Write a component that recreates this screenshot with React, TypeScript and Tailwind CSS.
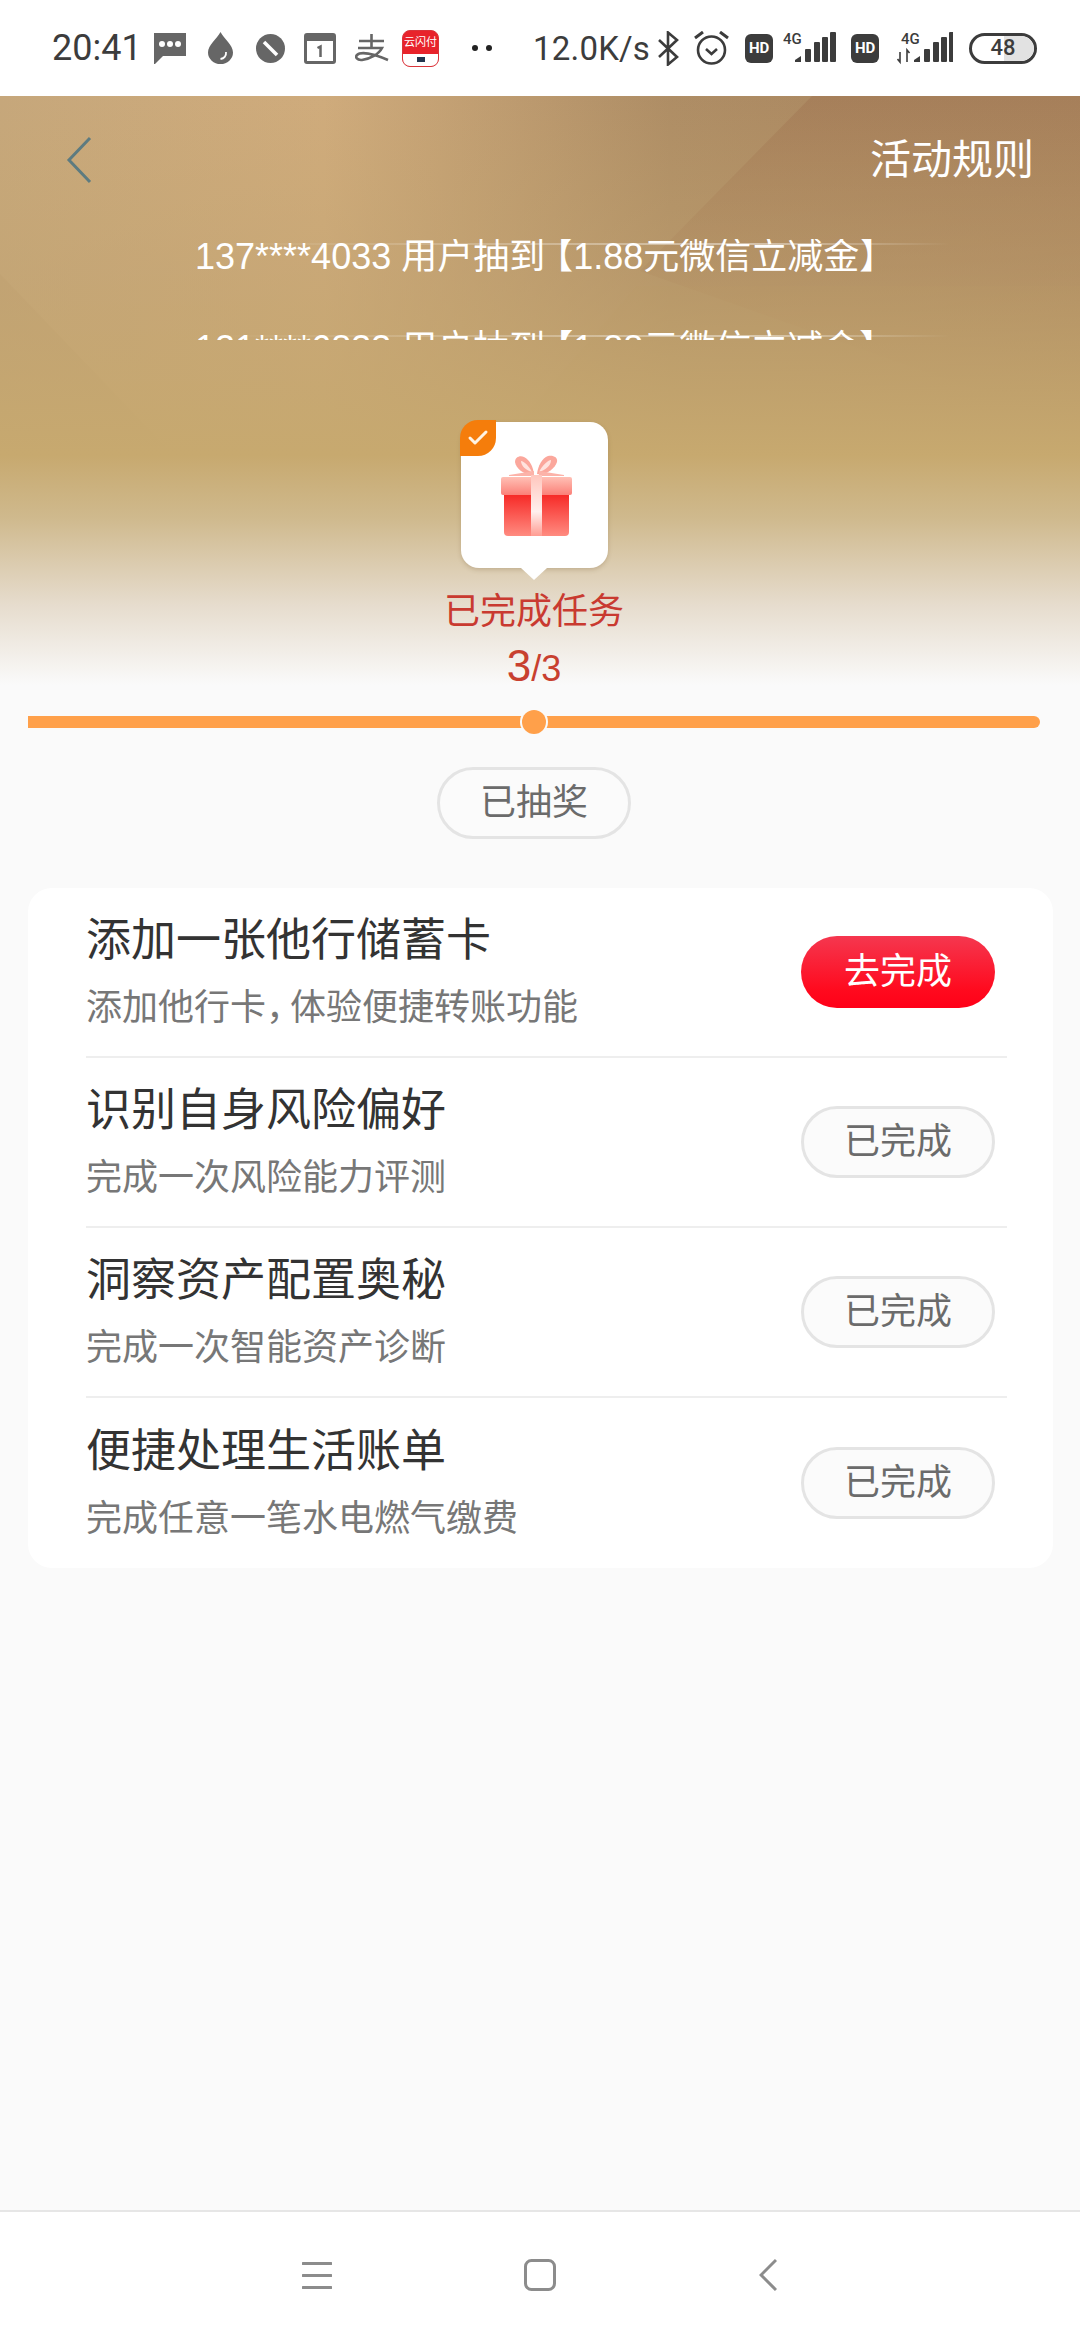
import type { ReactNode } from "react"
import { Check } from "lucide-react"

const tasks: { title: string; desc: ReactNode; done: boolean }[] = [
  {
    title: "添加一张他行储蓄卡",
    desc: (
      <>
        添加他行卡<span className="tracking-[-12px]">，</span>体验便捷转账功能
      </>
    ),
    done: false,
  },
  { title: "识别自身风险偏好", desc: "完成一次风险能力评测", done: true },
  { title: "洞察资产配置奥秘", desc: "完成一次智能资产诊断", done: true },
  { title: "便捷处理生活账单", desc: "完成任意一笔水电燃气缴费", done: true },
]

const winners = ["137****4033", "121****6833"]

function Signal({ arrows }: { arrows?: boolean }) {
  const start = arrows ? 17 : 12
  const bars = [
    { x: 10, h: 13 },
    { x: 19, h: 20 },
    { x: 27, h: 25 },
    { x: 35, h: 30 },
  ]
  return (
    <svg width={arrows ? 56 : 53} height="34" viewBox={arrows ? "0 0 56 34" : "0 0 53 34"} fill="#3c3c3c">
      <text x={arrows ? 4 : 0} y="13" fontSize="15" fontFamily="Roboto" fontWeight="500">4G</text>
      <polygon points={`${start},31 ${start + 6},31 ${start + 6},25 ${start},29`} />
      {bars.map((b) => (
        <rect key={b.x} x={start + b.x} y={31 - b.h} width="6" height={b.h} rx="1" />
      ))}
      {arrows && <path d="M3 21v10l-2.500-3M10 31V19l2.500 3" stroke="#3c3c3c" strokeWidth="1.600" fill="none" />}
    </svg>
  )
}

function HdBadge() {
  return (
    <div className="w-[28px] h-[29px] rounded-[6px] bg-[#3c3c3c] flex items-center justify-center text-white text-[15px] font-bold font-['Roboto',sans-serif] shrink-0">
      HD
    </div>
  )
}

function StatusBar() {
  return (
    <div className="h-[96px] bg-white flex items-center pl-[52px] shrink-0 text-[#3c3c3c] font-['Roboto',sans-serif]">
      <span className="text-[36px] leading-none w-[85px] whitespace-nowrap">20:41</span>
      {/* message */}
      <svg className="ml-[16px]" width="34" height="34" viewBox="0 0 34 34">
        <path d="M1 2h32v23H10l-8 8h-1z" fill="#666" />
        <circle cx="9" cy="13" r="3" fill="#fff" />
        <circle cx="17" cy="13" r="3" fill="#fff" />
        <circle cx="25" cy="13" r="3" fill="#fff" />
      </svg>
      {/* drop */}
      <svg className="ml-[21px]" width="25" height="32" viewBox="0 0 25 32">
        <path d="M12.500 0C9 7 0 13 0 20.500a12.500 11.500 0 0 0 25 0C25 13 16 7 12.500 0z" fill="#666" />
        <path d="M18 20c.5 4-2 6.500-5.500 7" stroke="#fff" strokeWidth="1.800" fill="none" />
      </svg>
      {/* no disturb */}
      <svg className="ml-[23px]" width="29" height="29" viewBox="0 0 29 29">
        <circle cx="14.500" cy="14.500" r="14.500" fill="#666" />
        <path d="M8 8l13 13" stroke="#fff" strokeWidth="3.500" />
      </svg>
      {/* calendar */}
      <svg className="ml-[19px]" width="32" height="31" viewBox="0 0 32 31">
        <rect x="1.500" y="1.500" width="29" height="28" rx="1.500" fill="none" stroke="#666" strokeWidth="3" />
        <rect x="1" y="1" width="30" height="7" fill="#666" />
        <path d="M13.500 15l3-1.500V24" fill="none" stroke="#666" strokeWidth="2.500" />
      </svg>
      {/* alipay */}
      <svg className="ml-[19px]" width="34" height="28" viewBox="0 0 34 28">
        <path d="M4 7h25M16.500 0v14M3 14h24C24 20 15 25 7 26c-5 .5-7-3-5-5 4-4 17-1 31 5" fill="none" stroke="#666" strokeWidth="2.600" />
      </svg>
      {/* app icon */}
      <div className="ml-[13px] w-[37px] h-[37px] rounded-[8px] bg-[#e8232b] flex flex-col items-center overflow-hidden shrink-0 border border-[#d9343a]">
        <span className="text-white text-[11px] leading-[13px] mt-[4px] whitespace-nowrap font-['Noto_Sans_CJK_SC',sans-serif]">云闪付</span>
        <div className="mt-auto w-full h-[12px] bg-white flex justify-center items-center">
          <div className="w-[8px] h-[5px] bg-[#23364f]" />
        </div>
      </div>
      <div className="ml-[33px] flex gap-[8px]">
        <div className="w-[6px] h-[6px] rounded-full bg-[#222]" />
        <div className="w-[6px] h-[6px] rounded-full bg-[#222]" />
      </div>
      <span className="ml-[41px] text-[33px] leading-none whitespace-nowrap tracking-[0.2px]">12.0K/s</span>
      {/* bluetooth */}
      <svg className="ml-[7px]" width="22" height="35" viewBox="0 0 22 35">
        <path d="M2 9l18 17-9 7.500V1.500L20 9 2 26" fill="none" stroke="#3c3c3c" strokeWidth="2.600" />
      </svg>
      {/* alarm */}
      <svg className="ml-[15px]" width="35" height="34" viewBox="0 0 35 34">
        <circle cx="17.500" cy="19" r="13.500" fill="none" stroke="#3c3c3c" strokeWidth="2.600" />
        <path d="M12 18l5.500 5 5.500-5" fill="none" stroke="#3c3c3c" strokeWidth="2.600" />
        <path d="M1 7l8-6M34 7l-8-6" fill="none" stroke="#3c3c3c" strokeWidth="3" />
      </svg>
      <div className="ml-[16px]"><HdBadge /></div>
      <div className="ml-[10px]"><Signal /></div>
      <div className="ml-[15px]"><HdBadge /></div>
      <div className="ml-[18px]"><Signal arrows /></div>
      {/* battery */}
      <div className="ml-[16px] w-[68px] h-[31px] rounded-full border-[3px] border-[#3c3c3c] relative flex items-center justify-center overflow-hidden shrink-0">
        <div className="absolute right-0 top-0 bottom-0 w-[30px] bg-[#e2e2e2] rounded-r-full" />
        <span className="relative text-[22px] leading-none font-medium">48</span>
      </div>
    </div>
  )
}

function HeroBackground() {
  return (
    <svg className="absolute inset-0" width="1080" height="620" viewBox="0 0 1080 620" preserveAspectRatio="none">
      <defs>
        <linearGradient id="base" x1="0" y1="0" x2="1" y2="0">
          <stop offset="0" stopColor="#c6a77b" />
          <stop offset="0.3" stopColor="#cfab7c" />
          <stop offset="0.62" stopColor="#ae8d65" />
          <stop offset="1" stopColor="#a9845d" />
        </linearGradient>
        <linearGradient id="down" x1="0" y1="0" x2="0" y2="1">
          <stop offset="0" stopColor="#c5a76e" stopOpacity="0" />
          <stop offset="0.28" stopColor="#c2a470" stopOpacity="0.45" />
          <stop offset="0.58" stopColor="#c7a96f" stopOpacity="1" />
          <stop offset="0.68" stopColor="#cfb98d" />
          <stop offset="0.82" stopColor="#e6dccd" />
          <stop offset="0.95" stopColor="#fafafa" />
          <stop offset="1" stopColor="#fafafa" />
        </linearGradient>
        <linearGradient id="facet" x1="0" y1="0" x2="0" y2="1">
          <stop offset="0" stopColor="#a67f5a" />
          <stop offset="1" stopColor="#a67f5a" stopOpacity="0" />
        </linearGradient>
      </defs>
      <rect width="1080" height="620" fill="url(#base)" />
      <polygon points="812,0 1080,0 1080,330 640,175" fill="url(#facet)" />
      <polygon points="637,190 1080,190 1080,420 516,330" fill="#b4905f" fillOpacity="0.18" />
      <polygon points="0,178 165,350 0,350" fill="#a98a5f" fillOpacity="0.16" />
      <rect width="1080" height="620" fill="url(#down)" />
    </svg>
  )
}

function GiftIcon() {
  return (
    <svg width="72" height="82" viewBox="0 0 72 82">
      <defs>
        <linearGradient id="box" x1="0" y1="0" x2="0" y2="1">
          <stop offset="0" stopColor="#f40c0c" />
          <stop offset="1" stopColor="#ff8b80" />
        </linearGradient>
        <linearGradient id="lid" x1="0" y1="0" x2="0" y2="1">
          <stop offset="0" stopColor="#ffc0b5" />
          <stop offset="1" stopColor="#fb8078" />
        </linearGradient>
        <linearGradient id="ribbon" x1="0" y1="0" x2="0" y2="1">
          <stop offset="0" stopColor="#ffc6bd" />
          <stop offset="0.6" stopColor="#fff0ee" />
          <stop offset="1" stopColor="#ff9c92" />
        </linearGradient>
      </defs>
      <path d="M33 19C24 21 15 14 14 7c0-5 5-7 9-5 6 3 9 10 10 17z" fill="#fba79c" />
      <path d="M36 19C44 21 54 14 56 7c1-5-4-7-9-6-6 2-10 10-11 18z" fill="#fba79c" />
      <path d="M20 6c3 0 8 5 11 11-6-2-11-6-11-11zM50 5c-3 0-9 6-12 12 6-2 12-6 12-12z" fill="#ffe3de" />
      <path d="M8 20l25-4v5H8zM63 20l-25-4v5h25z" fill="#fcb3a9" />
      <rect x="3" y="27" width="65" height="54" rx="4" fill="url(#box)" />
      <rect x="0" y="22" width="71" height="18" rx="2" fill="url(#lid)" />
      <rect x="30" y="20" width="11" height="61" fill="url(#ribbon)" />
    </svg>
  )
}

function Hero() {
  return (
    <div className="relative h-[620px] shrink-0">
      <HeroBackground />
      <div className="relative flex flex-col">
        <div className="w-full h-[128px] flex items-center justify-between pl-[66px] pr-[46px]">
          <svg width="26" height="48" viewBox="0 0 26 48">
            <path d="M24 2L3 24l21 22" fill="none" stroke="#5d7b80" strokeWidth="3" />
          </svg>
          <span className="text-[41px] leading-none text-white">活动规则</span>
        </div>
        {/* ticker, second line cut off by the window */}
        <div className="mt-[15px] h-[101px] w-full overflow-hidden">
          {winners.map((phone) => (
            <div
              key={phone}
              className="h-[92px] pl-[195px] text-[36px] leading-[36px] text-white whitespace-nowrap bg-[linear-gradient(90deg,transparent_20%,rgba(255,255,255,0.45)_70%,transparent_88%)] bg-[length:100%_2px] bg-[position:0_4px] bg-no-repeat"
            >
              {phone} 用户抽<span className="tracking-[-8px]">到</span>【1.88元微信立减金】
            </div>
          ))}
        </div>
        {/* gift bubble */}
        <div className="w-[1068px] flex flex-col items-center">
          <div className="relative mt-[82px] w-[147px] h-[146px] bg-white rounded-[18px] flex items-center justify-center shadow-[0_2px_4px_rgba(120,90,50,0.25)]">
            <div className="absolute -left-px -top-[2px] w-[36px] h-[36px] bg-[#f57d0b] rounded-tl-[18px] rounded-br-[18px] flex items-center justify-center">
              <Check className="w-[24px] h-[24px] text-[#fff3e3]" strokeWidth={3} />
            </div>
            <div className="absolute left-1/2 -bottom-[12px] -ml-[13px] w-0 h-0 border-x-[13px] border-x-transparent border-t-[12px] border-t-white" />
            <div className="mt-[2px] ml-[6px]"><GiftIcon /></div>
          </div>
          <div className="mt-[22px] text-[36px] leading-[44px] text-[#c93a30]">已完成任务</div>
          <div className="mt-[7px] h-[50px] leading-[50px] text-[#c8402f] font-['Liberation_Sans',sans-serif]">
            <span className="text-[44px]">3</span>
            <span className="text-[36px]">/3</span>
          </div>
        </div>
      </div>
    </div>
  )
}

function Pill({ children, red }: { children: string; red?: boolean }) {
  return (
    <div
      className={`w-[194px] h-[72px] rounded-full flex items-center justify-center text-[36px] leading-none shrink-0 ${
        red
          ? "bg-[linear-gradient(180deg,#f5374f_0%,#ff0a1e_75%,#ff0018_100%)] text-white"
          : "border-[3px] border-[#e4e4e4] bg-[#fbfbfb] text-[#6b6b6b]"
      }`}
    >
      {children}
    </div>
  )
}

function NavBar() {
  return (
    <div className="mt-auto h-[130px] bg-white border-t-2 border-[#e6e6e6] flex items-center pb-[2px] shrink-0">
      <svg className="ml-[302px]" width="30" height="29" viewBox="0 0 30 29">
        <path d="M1 2.500h28M1 14.500h28M1 26.500h28" stroke="#8c8c8c" strokeWidth="3" strokeLinecap="round" />
      </svg>
      <svg className="ml-[192px]" width="32" height="32" viewBox="0 0 32 32">
        <rect x="1.500" y="1.500" width="29" height="29" rx="6" fill="none" stroke="#8c8c8c" strokeWidth="3" />
      </svg>
      <svg className="ml-[203px]" width="18" height="34" viewBox="0 0 18 34">
        <path d="M17 2L2 17l15 15" fill="none" stroke="#8c8c8c" strokeWidth="3" />
      </svg>
    </div>
  )
}

export default function App() {
  return (
    <div className="w-[1080px] h-[2340px] bg-[#fafafa] flex flex-col overflow-hidden font-['Liberation_Sans','Noto_Sans_CJK_SC',sans-serif]">
      <StatusBar />
      <Hero />

      {/* progress */}
      <div className="relative ml-[28px] w-[1012px] h-[12px] bg-[#ffa04a] rounded-r-full shrink-0">
        <div className="absolute left-1/2 -ml-[12px] -top-[6px] w-[24px] h-[24px] rounded-full bg-[#ffa04a] ring-2 ring-[#fafafa]" />
      </div>

      <div className="mt-[39px] w-[1068px] flex justify-center">
        <Pill>已抽奖</Pill>
      </div>

      {/* task list */}
      <div className="mt-[49px] ml-[28px] w-[1025px] bg-white rounded-[24px] pl-[58px] pr-[46px]">
        {tasks.map((task, i) => (
          <div
            key={task.title}
            className={`h-[170px] flex items-center justify-between pr-[12px] ${i < tasks.length - 1 ? "border-b-2 border-[#eeeeee]" : ""}`}
          >
            <div className="pt-[4px]">
              <div className="text-[45px] leading-[50px] text-[#333333]">{task.title}</div>
              <div className="mt-[17px] text-[36px] leading-[50px] text-[#777777]">{task.desc}</div>
            </div>
            <Pill red={!task.done}>{task.done ? "已完成" : "去完成"}</Pill>
          </div>
        ))}
      </div>

      <NavBar />
    </div>
  )
}
